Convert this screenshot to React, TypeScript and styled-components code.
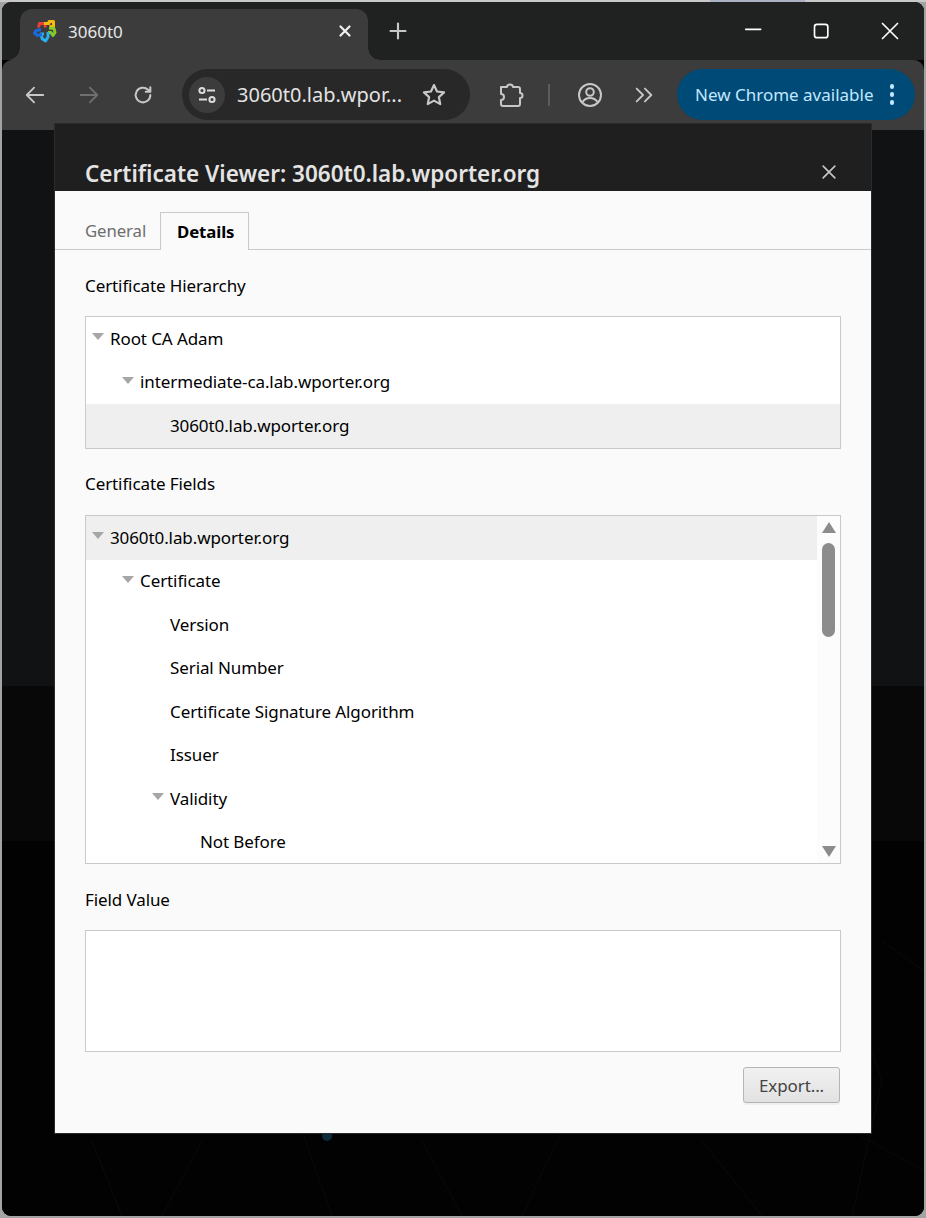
import styled, { createGlobalStyle } from "styled-components";

const UI_FONT = `"Noto Sans", "Open Sans", "Liberation Sans", sans-serif`;

const GlobalStyle = createGlobalStyle`
  html, body {
    margin: 0;
    padding: 0;
    background: #a3a3a3;
  }
  * { box-sizing: border-box; }
  svg { flex: none; }
`;

const Page = styled.div`
  width: 926px;
  height: 1218px;
  padding: 2px;
  overflow: hidden;
  font-family: ${UI_FONT};
  background: linear-gradient(to right, #c9c9c9 710px, #aab1c2 710px, #aab1c2 805px, #c9c9c9 805px) top / 100% 2px no-repeat, #a3a3a3;
`;

const Window = styled.div`
  position: relative;
  width: 922px;
  height: 1214px;
  border-radius: 9px;
  overflow: hidden;
  display: flex;
  flex-direction: column;
  background: #000;
`;

/* ---------- title bar ---------- */

const TitleBar = styled.div`
  height: 58px;
  flex: none;
  background: #202221;
  padding: 7px 0 0 18px;
  display: flex;
  align-items: flex-start;
`;

const Tab = styled.div`
  position: relative;
  width: 348px;
  height: 51px;
  background: #3c3c3c;
  border-radius: 12px 12px 0 0;
  display: flex;
  align-items: center;
  padding: 0 14px 7px 13px;
  color: #e6e6e6;
  font-size: 17px;

  &::before, &::after {
    content: "";
    position: absolute;
    bottom: 0;
    width: 12px;
    height: 12px;
  }
  &::before {
    left: -12px;
    background: radial-gradient(circle at 0 0, transparent 11.5px, #3c3c3c 12px);
  }
  &::after {
    right: -12px;
    background: radial-gradient(circle at 100% 0, transparent 11.5px, #3c3c3c 12px);
  }
`;

const TabTitle = styled.span`
  flex: 1;
  margin-left: 11px;
`;

const NewTabButton = styled.div`
  width: 20px;
  height: 20px;
  margin: 12px 0 0 20px;
  display: flex;
`;

const WindowControls = styled.div`
  margin-left: auto;
  display: flex;
  align-items: center;
  height: 44px;
  gap: 48px;
  padding-right: 24px;
`;

/* ---------- toolbar ---------- */

const Toolbar = styled.div`
  position: relative;
  height: 70px;
  flex: none;
  background: #3c3c3c;
  border-radius: 10px 10px 0 0;
  display: flex;
  align-items: flex-start;
  padding: 9px 9px 0 22px;
`;

const NavIcon = styled.div<{ $w?: number; $gap?: number }>`
  width: ${(p) => p.$w ?? 22}px;
  height: 51px;
  margin-right: ${(p) => p.$gap ?? 0}px;
  flex: none;
  display: flex;
  align-items: center;
  justify-content: center;
`;

const Omnibox = styled.div`
  width: 288px;
  height: 51px;
  flex: none;
  border-radius: 26px;
  background: #282828;
  display: flex;
  align-items: center;
  padding: 0 23px 0 7px;
  margin-right: 28px;
`;

const SiteInfo = styled.div`
  width: 36px;
  height: 36px;
  border-radius: 50%;
  background: #3c3c3c;
  display: flex;
  align-items: center;
  justify-content: center;
  flex: none;
`;

const Url = styled.span`
  flex: 1;
  margin-left: 12px;
  color: #e3e3e3;
  font-size: 20px;
  white-space: nowrap;
`;

const Separator = styled.div`
  width: 2px;
  height: 22px;
  background: #5c5c5c;
  margin: 15px 27px 0 24px;
  flex: none;
`;

const UpdateChip = styled.div`
  margin-left: auto;
  width: 238px;
  height: 51px;
  flex: none;
  border-radius: 26px;
  background: #004a77;
  color: #c2e7ff;
  font-size: 17px;
  display: flex;
  align-items: center;
  justify-content: space-between;
  padding: 0 21px 0 18px;
`;

const ChipDots = styled.div`
  display: flex;
  flex-direction: column;
  gap: 3.500px;
`;

const ChipDot = styled.span`
  width: 4.500px;
  height: 4.500px;
  border-radius: 50%;
  background: #c2e7ff;
`;

/* ---------- dark page behind the dialog ---------- */

const Backdrop = styled.div`
  flex: 1;
  display: flex;
  flex-direction: column;
`;

const Band = styled.div<{ $h: number; $bg: string }>`
  height: ${(p) => p.$h}px;
  background: ${(p) => p.$bg};
  flex: none;
`;

const BottomBand = styled.div`
  flex: 1;
  position: relative;
  background: #020202;
`;

const FaintLines = styled.svg`
  display: block;
  width: 100%;
  height: 100%;
`;

/* ---------- dialog ---------- */

const Dialog = styled.div`
  position: absolute;
  left: 53px;
  top: 122px;
  width: 816px;
  height: 1009px;
  display: flex;
  flex-direction: column;
  box-shadow: 0 0 0 1px #2b2b2b;
`;

const DialogHeader = styled.div`
  height: 67px;
  flex: none;
  background: #1f1f1f;
  display: flex;
  align-items: flex-end;
  justify-content: space-between;
  padding: 0 32px 0 30px;
  overflow: hidden;
`;

const DialogTitle = styled.h1`
  margin: 0 0 1px;
  font-size: 22.500px;
  line-height: 32px;
  font-weight: 600;
  color: #e4e4e4;
`;

const CloseButton = styled.div`
  width: 20px;
  height: 20px;
  margin-bottom: 9px;
  display: flex;
`;

const DialogBody = styled.div`
  flex: 1;
  background: #fafafa;
  display: flex;
  flex-direction: column;
`;

const TabStrip = styled.div`
  height: 59px;
  flex: none;
  padding: 21px 0 0 30px;
  border-bottom: 1px solid #c9c9c9;
  display: flex;
  font-size: 16.800px;
  letter-spacing: -0.1px;
`;

const CertTab = styled.div<{ $active?: boolean }>`
  height: 38px;
  width: ${(p) => (p.$active ? "89px" : "75px")};
  padding-left: ${(p) => (p.$active ? "16px" : "0")};
  line-height: 37px;
  font-weight: ${(p) => (p.$active ? 700 : 400)};
  color: ${(p) => (p.$active ? "#000" : "#6e6e6e")};
  background: ${(p) => (p.$active ? "#fafafa" : "transparent")};
  border: ${(p) => (p.$active ? "1px solid #c9c9c9" : "none")};
  border-bottom: none;
`;

const Content = styled.div`
  flex: 1;
  padding: 0 30px;
  display: flex;
  flex-direction: column;
  color: #000;
  font-size: 17px;
  letter-spacing: -0.1px;
`;

const SectionLabel = styled.div<{ $top: number }>`
  margin-top: ${(p) => p.$top}px;
  height: 26px;
  line-height: 25px;
`;

const ListBox = styled.div<{ $h: number; $top: number }>`
  position: relative;
  height: ${(p) => p.$h}px;
  margin-top: ${(p) => p.$top}px;
  border: 1px solid #c9c9c9;
  background: #fff;
  overflow: hidden;
  display: flex;
`;

const TreeList = styled.div`
  flex: 1;
  min-width: 0;
`;

const TreeRow = styled.div<{ $level: number; $selected?: boolean }>`
  height: 43.500px;
  display: flex;
  align-items: center;
  padding: 0 0 1px ${(p) => 6 + p.$level * 30}px;
  background: ${(p) => (p.$selected ? "#efefef" : "transparent")};
  white-space: nowrap;
`;

const Caret = styled.span<{ $hidden?: boolean }>`
  width: 0;
  height: 0;
  margin-right: 6px;
  margin-top: -3px;
  flex: none;
  border-left: 6px solid transparent;
  border-right: 6px solid transparent;
  border-top: 7px solid ${(p) => (p.$hidden ? "transparent" : "#a6a6a6")};
`;

const ScrollTrack = styled.div`
  width: 23px;
  flex: none;
  background: #fcfcfc;
  display: flex;
  flex-direction: column;
  align-items: center;
  padding: 6px 0 6px;
`;

const ScrollThumb = styled.div`
  width: 13px;
  height: 94px;
  border-radius: 7px;
  background: #8c8c8c;
  margin-top: 10px;
`;

const ScrollArrow = styled.span<{ $down?: boolean }>`
  width: 0;
  height: 0;
  flex: none;
  border-left: 7.500px solid transparent;
  border-right: 7.500px solid transparent;
  ${(p) =>
    p.$down
      ? "border-top: 11px solid #8c8c8c; margin-top: auto;"
      : "border-bottom: 11px solid #8c8c8c;"}
`;

const ButtonRow = styled.div`
  display: flex;
  justify-content: flex-end;
  margin-top: 15px;
  padding-right: 1px;
`;

const ExportButton = styled.button`
  width: 97px;
  height: 36px;
  padding: 0;
  border: 1px solid #b5b5b5;
  border-radius: 3px;
  background: linear-gradient(#f1f1f1, #e2e2e2);
  box-shadow: 0 2px 0 #efefef;
  color: #444;
  font-family: ${UI_FONT};
  font-size: 17px;
  letter-spacing: -0.1px;
`;

const hierarchy = [
  { label: "Root CA Adam", level: 0, caret: true },
  { label: "intermediate-ca.lab.wporter.org", level: 1, caret: true },
  { label: "3060t0.lab.wporter.org", level: 2, caret: false, selected: true },
];

const fields = [
  { label: "3060t0.lab.wporter.org", level: 0, caret: true, selected: true },
  { label: "Certificate", level: 1, caret: true },
  { label: "Version", level: 2, caret: false },
  { label: "Serial Number", level: 2, caret: false },
  { label: "Certificate Signature Algorithm", level: 2, caret: false },
  { label: "Issuer", level: 2, caret: false },
  { label: "Validity", level: 2, caret: true },
  { label: "Not Before", level: 3, caret: false },
];

type Row = { label: string; level: number; caret: boolean; selected?: boolean };

const Tree = ({ rows }: { rows: Row[] }) => (
  <TreeList>
    {rows.map((r) => (
      <TreeRow key={r.label + r.level} $level={r.level} $selected={r.selected}>
        <Caret $hidden={!r.caret} />
        {r.label}
      </TreeRow>
    ))}
  </TreeList>
);

// pinwheel favicon, five chunky arms around a dark middle
const Favicon = () => (
  <svg width="24" height="24" viewBox="0 0 24 24" fill="none" strokeWidth="3" strokeLinejoin="round">
    <path d="M5.500 8.500l1-4h5l1 4" stroke="#e8403a" />
    <path d="M11 4.500h5V2.500h4.500v5h-4" stroke="#f4bb0c" />
    <path d="M16 9l5 .5 1 4-2 3-2-3h-3" stroke="#86c92b" />
    <path d="M15 13v5l-2.500 4-3.500-2.500-1-4.500h3" stroke="#2ab0ee" />
    <path d="M8 10.500l-4.500 1-2 2.500 3 2.500 4.500-1" stroke="#1a68dc" />
  </svg>
);

const Stroke = ({ d, size = 22, color = "#c7c7c7", width = 2 }: { d: string; size?: number; color?: string; width?: number }) => (
  <svg width={size} height={size} viewBox="0 0 24 24" fill="none" stroke={color} strokeWidth={width} strokeLinecap="round" strokeLinejoin="round">
    <path d={d} />
  </svg>
);

export default function App() {
  return (
    <>
      <GlobalStyle />
      <Page>
        <Window>
          <TitleBar>
            <Tab>
              <Favicon />
              <TabTitle>3060t0</TabTitle>
              <Stroke d="M6 6l12 12M18 6L6 18" size={18} color="#f0f0f0" width={3} />
            </Tab>
            <NewTabButton>
              <Stroke d="M12 3v18M3 12h18" size={20} color="#c7c7c7" width={2.6} />
            </NewTabButton>
            <WindowControls>
              <Stroke d="M2 10h18" size={20} color="#fff" width={2} />
              <Stroke d="M6 4h10a3 3 0 0 1 3 3v10a3 3 0 0 1-3 3H6a3 3 0 0 1-3-3V7a3 3 0 0 1 3-3z" size={20} color="#fff" width={2} />
              <Stroke d="M3 3l18 18M21 3L3 21" size={20} color="#fff" width={2} />
            </WindowControls>
          </TitleBar>

          <Toolbar>
            <NavIcon $gap={32}>
              <Stroke d="M21 12H3M11 4l-8 8 8 8" color="#c7c7c7" />
            </NavIcon>
            <NavIcon $gap={32}>
              <Stroke d="M3 12h18M13 4l8 8-8 8" color="#6f6f6f" />
            </NavIcon>
            <NavIcon $gap={28}>
              <Stroke d="M20 12a8 8 0 1 1-2.500-5.800L20 8.500M20 3.500v5h-5" color="#c7c7c7" width={2.2} />
            </NavIcon>
            <Omnibox>
              <SiteInfo>
                <svg width="20" height="20" viewBox="0 0 20 20" fill="none" stroke="#dcdcdc" strokeWidth="2">
                  <circle cx="5" cy="5.500" r="2.600" />
                  <path d="M10 5.500h8M2 14.500h8" />
                  <circle cx="15" cy="14.500" r="2.600" />
                </svg>
              </SiteInfo>
              <Url>3060t0.lab.wpor...</Url>
              <Stroke d="M12 2.800l2.800 6 6.500.8-4.800 4.400 1.300 6.400L12 17.200l-5.800 3.200 1.300-6.400-4.800-4.400 6.500-.8z" size={26} color="#c7c7c7" />
            </Omnibox>
            <NavIcon $w={26}>
              <svg width="26" height="26" viewBox="0 0 26 26" fill="none" stroke="#c7c7c7" strokeWidth="2" strokeLinejoin="round">
                <path d="M3 5H9a3 2.500 0 0 1 6 0H20a2 2 0 0 1 2 2V11a2.500 2.500 0 0 1 0 5V22a2 2 0 0 1-2 2H5a2 2 0 0 1-2-2V18a3 3 0 0 0 0-6z" />
              </svg>
            </NavIcon>
            <Separator />
            <NavIcon $w={26} $gap={30}>
              <svg width="26" height="26" viewBox="0 0 26 26" fill="none" stroke="#c7c7c7" strokeWidth="2">
                <circle cx="13" cy="13" r="11" />
                <circle cx="13" cy="10" r="3.800" />
                <path d="M5.500 20c2-3 4.500-4 7.500-4s5.500 1 7.500 4" />
              </svg>
            </NavIcon>
            <NavIcon>
              <Stroke d="M4 5l7 7-7 7M13 5l7 7-7 7" color="#c7c7c7" />
            </NavIcon>
            <UpdateChip>
              New Chrome available
              <ChipDots>
                <ChipDot />
                <ChipDot />
                <ChipDot />
              </ChipDots>
            </UpdateChip>
          </Toolbar>

          <Backdrop>
            <Band $h={556} $bg="#101214" />
            <Band $h={155} $bg="#080808" />
            <BottomBand>
              <FaintLines viewBox="0 0 922 375" preserveAspectRatio="none">
                <circle cx="325" cy="295" r="5" fill="#0c2c3c" />
                <g stroke="#0a0a0a" strokeWidth="1" fill="none">
                  <path d="M870 60l-30 60 40 120-30 135M880 100l42 30M850 290l72 40" />
                  <path d="M90 300l30 75M200 300l-40 75M300 290l30 85M420 300l40 75M560 290l-40 85M700 300l60 75" />
                </g>
              </FaintLines>
            </BottomBand>
          </Backdrop>

          <Dialog>
            <DialogHeader>
              <DialogTitle>Certificate Viewer: 3060t0.lab.wporter.org</DialogTitle>
              <CloseButton>
                <Stroke d="M5 5l14 14M19 5L5 19" size={20} color="#c7c7c7" width={2} />
              </CloseButton>
            </DialogHeader>
            <DialogBody>
              <TabStrip>
                <CertTab>General</CertTab>
                <CertTab $active>Details</CertTab>
              </TabStrip>
              <Content>
                <SectionLabel $top={23}>Certificate Hierarchy</SectionLabel>
                <ListBox $h={133} $top={17}>
                  <Tree rows={hierarchy} />
                </ListBox>
                <SectionLabel $top={22}>Certificate Fields</SectionLabel>
                <ListBox $h={349} $top={18}>
                  <Tree rows={fields} />
                  <ScrollTrack>
                    <ScrollArrow />
                    <ScrollThumb />
                    <ScrollArrow $down />
                  </ScrollTrack>
                </ListBox>
                <SectionLabel $top={23}>Field Value</SectionLabel>
                <ListBox $h={122} $top={17} />
                <ButtonRow>
                  <ExportButton>Export...</ExportButton>
                </ButtonRow>
              </Content>
            </DialogBody>
          </Dialog>
        </Window>
      </Page>
    </>
  );
}
